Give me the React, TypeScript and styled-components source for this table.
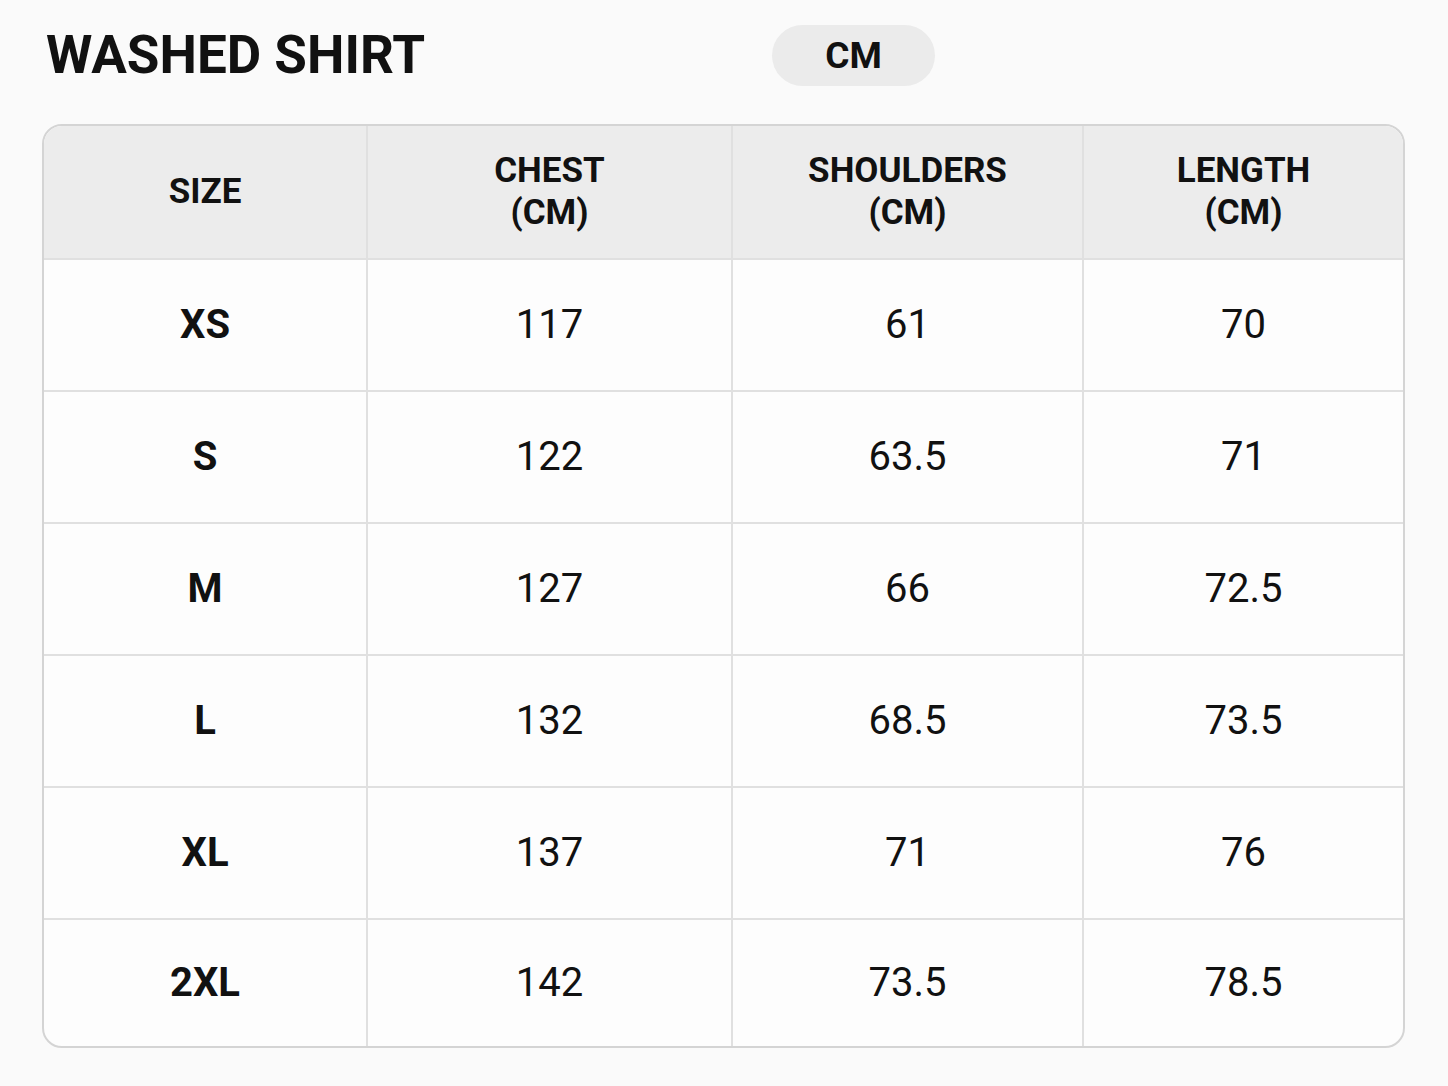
import styled, { createGlobalStyle } from "styled-components";

const GlobalStyle = createGlobalStyle`
body {
  margin: 0;
  background: #fafafa;
  font-family: Roboto, "Liberation Sans", Arial, sans-serif;
  color: #111;
}
`;

const Page = styled.div`
padding: 25px 0 40px 42px;
width: 1363px;
`;

const TopBar = styled.div`
display: flex;
align-items: center;
height: 61px;
`;

const Title = styled.h1`
margin: 0 0 0 4px;
width: 726px;
font-size: 53px;
line-height: 1;
font-weight: 700;
`;

const UnitPill = styled.div`
width: 163px;
height: 61px;
border-radius: 31px;
background: #ebebeb;
display: flex;
align-items: center;
justify-content: center;
font-size: 37px;
font-weight: 700;
`;

const Table = styled.div`
margin-top: 38px;
border: 2px solid #d4d4d4;
border-radius: 20px;
overflow: hidden;
background: #fdfdfd;
display: grid;
grid-template-columns: 324px 365px 351px 1fr;
`;

const Cell = styled.div<{ $head?: boolean; $bold?: boolean; $last?: boolean }>`
height: ${(p) => (p.$head ? 134 : p.$last ? 126 : 132)}px;
box-sizing: border-box;
display: flex;
align-items: center;
justify-content: center;
text-align: center;
background: ${(p) => (p.$head ? "#ececec" : "transparent")};
border-right: 2px solid #e0e0e0;
border-bottom: ${(p) => (p.$last ? "none" : "2px solid #e0e0e0")};
font-size: ${(p) => (p.$head ? 35 : 40)}px;
line-height: ${(p) => (p.$head ? "42px" : "1")};
font-weight: ${(p) => (p.$head || p.$bold ? 700 : 400)};
&:nth-child(4n) {
  border-right: none;
}
`;

const heads = [["SIZE"], ["CHEST", "(CM)"], ["SHOULDERS", "(CM)"], ["LENGTH", "(CM)"]];

const rows = [
    ["XS", "117", "61", "70"],
    ["S", "122", "63.5", "71"],
    ["M", "127", "66", "72.5"],
    ["L", "132", "68.5", "73.5"],
    ["XL", "137", "71", "76"],
    ["2XL", "142", "73.5", "78.5"],
];

function App() {
    return (
    <>
    <GlobalStyle />
    <Page>
        <TopBar>
            <Title>WASHED SHIRT</Title>
            <UnitPill>CM</UnitPill>
        </TopBar>
        <Table>
            {heads.map((h) => (
            <Cell $head key={h[0]}>
                <div>
                {h.map((line) => <div key={line}>{line}</div>)}
                </div>
            </Cell>
            ))}
            {rows.map((r, i) =>
            r.map((v, j) => (
                <Cell key={i + "-" + j} $bold={j === 0} $last={i === rows.length - 1}>
                {v}
                </Cell>
            ))
            )}
        </Table>
    </Page>
    </>
    );
}

export default App;
